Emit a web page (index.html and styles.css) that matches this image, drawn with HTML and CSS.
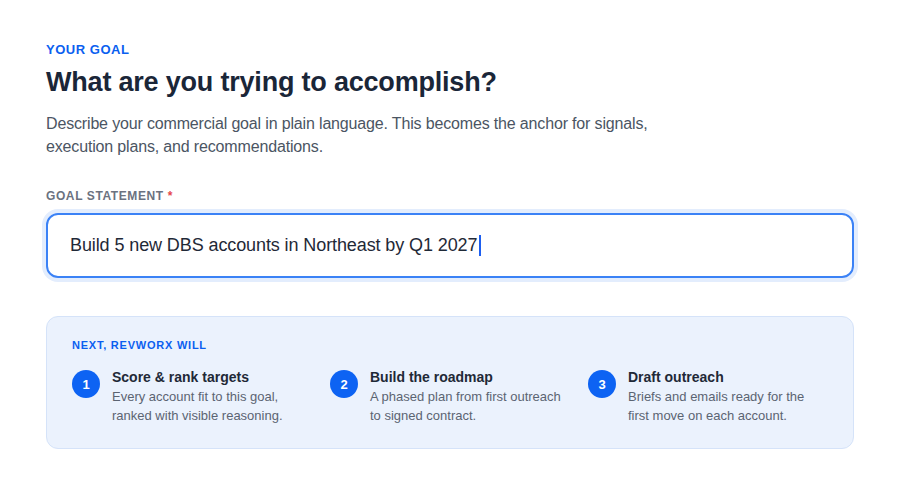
FILE: index.html
```html
<!DOCTYPE html>
<html lang="en">
  <head>
    <meta charset="UTF-8" />
    <meta name="viewport" content="width=device-width, initial-scale=1.0" />
    <title>Your Goal</title>
    <link rel="stylesheet" href="styles.css">
  </head>
  <body>
    <div class="container">
      <div class="eyebrow">Your goal</div>
      <h1>What are you trying to accomplish?</h1>
      <p class="lead">
        Describe your commercial goal in plain language. This becomes the anchor for signals,<br />
        execution plans, and recommendations.
      </p>

      <label class="field-label" for="goal">Goal statement <span class="req">*</span></label>
      <div class="goal-input">
        <span id="goal">Build 5 new DBS accounts in Northeast by Q1 2027</span><span class="caret"></span>
      </div>

      <!-- What happens next -->
      <div class="next-box">
        <div class="next-title">Next, RevWorx will</div>
        <div class="steps">
          <div class="step">
            <div class="step-num">1</div>
            <div>
              <div class="step-title">Score &amp; rank targets</div>
              <div class="step-desc">Every account fit to this goal, ranked with visible reasoning.</div>
            </div>
          </div>
          <div class="step">
            <div class="step-num">2</div>
            <div>
              <div class="step-title">Build the roadmap</div>
              <div class="step-desc">A phased plan from first outreach to signed contract.</div>
            </div>
          </div>
          <div class="step">
            <div class="step-num">3</div>
            <div>
              <div class="step-title">Draft outreach</div>
              <div class="step-desc">Briefs and emails ready for the first move on each account.</div>
            </div>
          </div>
        </div>
      </div>
    </div>
  </body>
</html>
```

FILE: styles.css
```css
body {
  margin: 0;
  background: #fff;
  font-family: "Liberation Sans", Arial, sans-serif;
  color: #1a2638;
}

.container {
  padding: 42px 46px 40px;
}

.eyebrow {
  color: #0b5ff0;
  font-size: 13px;
  font-weight: bold;
  text-transform: uppercase;
  letter-spacing: 0.04em;
  line-height: 16px;
}

h1 {
  margin: 7px 0 0;
  font-size: 27px;
  line-height: 34px;
  letter-spacing: -0.2px;
  color: #1a2638;
}

.lead {
  margin: 13px 0 0;
  font-size: 16px;
  line-height: 23px;
  letter-spacing: -0.01em;
  color: #4b5563;
}

.field-label {
  display: block;
  margin-top: 30px;
  font-size: 12px;
  font-weight: bold;
  text-transform: uppercase;
  letter-spacing: 0.05em;
  line-height: 16px;
  color: #6b7280;
}

.req {
  color: #e5484d;
}

.goal-input {
  margin-top: 9px;
  height: 61px;
  padding: 0 22px;
  border: 2px solid #3b82f6;
  border-radius: 12px;
  box-shadow: 0 0 0 4px #e3edfd;
  display: flex;
  align-items: center;
  font-size: 18px;
  letter-spacing: -0.1px;
  color: #1f2937;
}

.caret {
  display: inline-block;
  width: 2px;
  height: 21px;
  margin-left: 2px;
  background: #1d5ff0;
}

.next-box {
  margin-top: 38px;
  padding: 21px 25px 23px;
  background: #ebf2fd;
  border: 1px solid #d5e3f9;
  border-radius: 12px;
}

.next-title {
  color: #0b5ff0;
  font-size: 11px;
  font-weight: bold;
  text-transform: uppercase;
  letter-spacing: 0.07em;
  line-height: 14px;
}

.steps {
  margin-top: 15px;
  display: grid;
  grid-template-columns: repeat(3, 1fr);
  gap: 18px;
}

.step {
  display: flex;
  align-items: flex-start;
  gap: 12px;
}

.step-num {
  flex: none;
  width: 28px;
  height: 28px;
  margin-top: 3px;
  border-radius: 50%;
  background: #0d63f3;
  color: #fff;
  font-size: 13px;
  font-weight: bold;
  display: flex;
  align-items: center;
  justify-content: center;
}

.step-title {
  font-size: 14px;
  font-weight: bold;
  line-height: 20px;
  color: #1f2937;
}

.step-desc {
  font-size: 13px;
  line-height: 19px;
  color: #5b6472;
}
```
